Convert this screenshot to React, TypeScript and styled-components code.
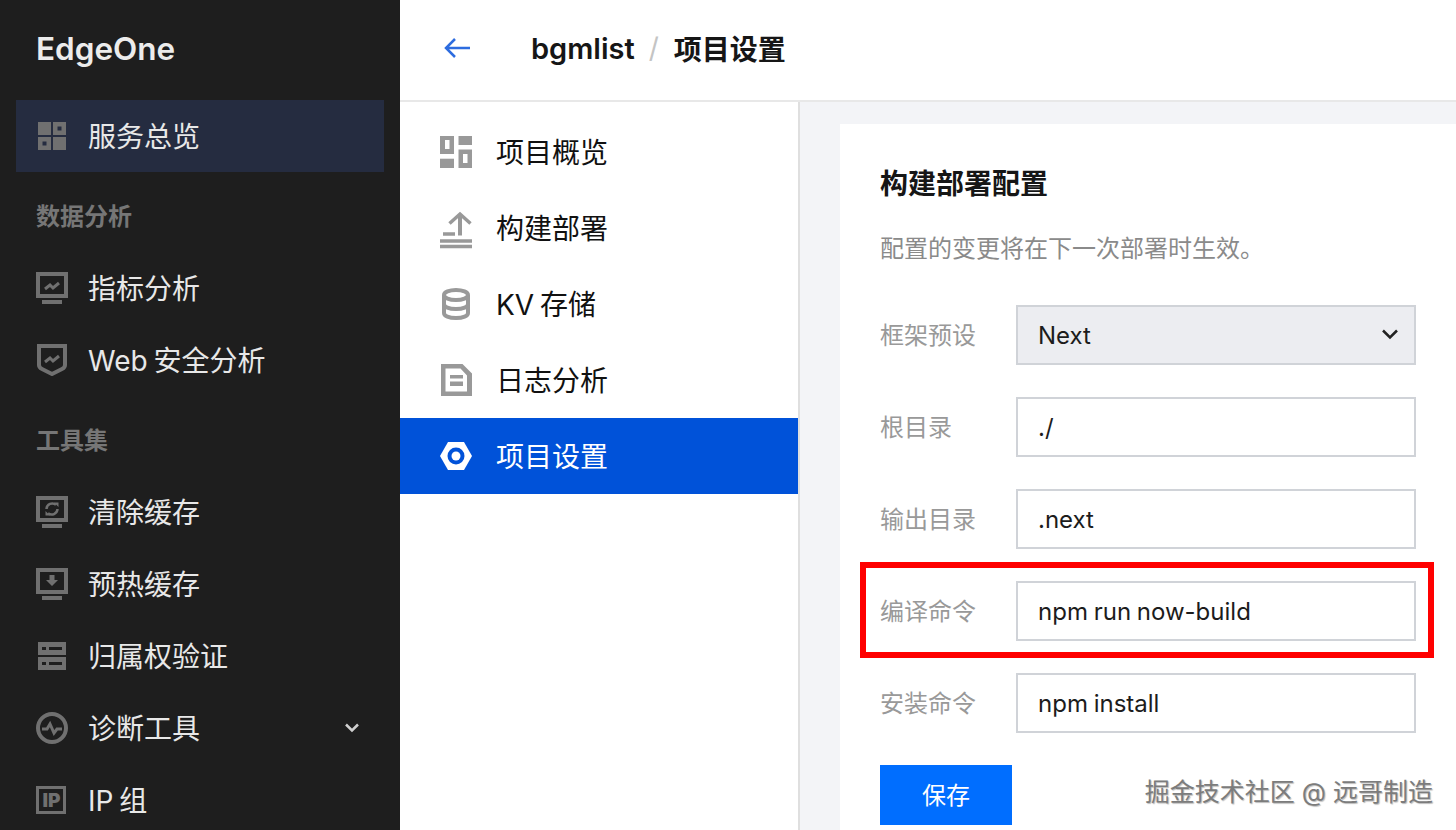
import { ReactNode } from "react";
import { createGlobalStyle, styled } from "styled-components";

const GlobalStyle = createGlobalStyle`
  html, body {
    margin: 0;
    padding: 0;
    background: #fff;
  }
  body {
    font-family: Inter, "Noto Sans CJK SC", sans-serif;
  }
`;

const Page = styled.div`
  display: flex;
  width: 1456px;
  height: 830px;
  overflow: hidden;
`;

const Sidebar = styled.aside`
  flex: 0 0 400px;
  background: #1e1e1e;
  color: #e8e8e8;
`;

const Brand = styled.div`
  height: 100px;
  line-height: 98px;
  padding-left: 36px;
  font-size: 31.5px;
  font-weight: 600;
  color: #ececec;
`;

const SideItem = styled.div<{ $active?: boolean }>`
  display: flex;
  align-items: center;
  gap: 20px;
  height: 72px;
  margin: 0 16px;
  padding: 0 24px 0 20px;
  font-size: 28px;
  word-spacing: -2px;
  background: ${props => (props.$active ? "#252c40" : "transparent")};
  svg {
    flex: none;
    width: 32px;
    height: 32px;
  }
`;

const SideLabel = styled.div`
  flex: 1;
  margin-top: -2px;
`;

const SideChevron = styled.svg`
  &&& {
    width: 16px;
    height: 16px;
  }
`;

const SideTitle = styled.div`
  height: 80px;
  box-sizing: border-box;
  padding: 29px 0 0 36px;
  line-height: 32px;
  font-size: 24px;
  font-weight: 700;
  color: #767676;
`;

const Main = styled.div`
  flex: 1;
  display: flex;
  flex-direction: column;
  min-width: 0;
`;

const Header = styled.header`
  display: flex;
  align-items: center;
  flex: 0 0 102px;
  box-sizing: border-box;
  padding: 0 0 4px 44px;
  border-bottom: 2px solid #e8e8e8;
  font-size: 28px;
  font-weight: 600;
  color: #161616;
`;

const BackArrow = styled.svg`
  width: 26px;
  height: 22px;
  margin-right: 61px;
`;

const ProjectName = styled.span`
  font-size: 29px;
`;

const Crumb = styled.span`
  color: #c4c4c4;
  font-weight: 400;
  margin: 0 15px 0 14px;
`;

const Body = styled.div`
  flex: 1;
  display: flex;
  min-height: 0;
`;

const Menu = styled.nav`
  flex: 0 0 398px;
  padding-top: 12px;
  border-right: 2px solid #dfdfdf;
`;

const MenuItem = styled.div<{ $active?: boolean }>`
  display: flex;
  align-items: center;
  gap: 24px;
  height: 76px;
  padding-left: 40px;
  font-size: 28px;
  word-spacing: -2px;
  color: ${props => (props.$active ? "#fff" : "#111")};
  background: ${props => (props.$active ? "#0052d9" : "transparent")};
  svg {
    flex: none;
    width: 32px;
    height: 32px;
    overflow: visible;
  }
`;

const MenuText = styled.span`
  margin-top: -2px;
`;

const Content = styled.main`
  position: relative;
  flex: 1;
  padding: 22px 0 0 40px;
  background: #f3f4f7;
  min-width: 0;
`;

const Card = styled.section`
  height: 100%;
  padding: 40px 40px 0 40px;
  background: #fff;
`;

const Title = styled.h2`
  margin: 0;
  line-height: 40px;
  font-size: 28px;
  font-weight: 600;
  color: #161616;
`;

const Hint = styled.p`
  margin: 29px 0 40px;
  line-height: 32px;
  font-size: 24px;
  color: #8a8a8a;
`;

const Form = styled.div`
  display: flex;
  flex-direction: column;
  gap: 32px;
`;

const Row = styled.div<{ $marked?: boolean }>`
  position: relative;
  display: flex;
  align-items: center;
  &::after {
    content: "";
    display: ${props => (props.$marked ? "block" : "none")};
    position: absolute;
    inset: -19px -18px -17px -20px;
    border: 6px solid #f00;
    pointer-events: none;
  }
`;

const Label = styled.label`
  flex: 0 0 136px;
  margin-top: -3px;
  font-size: 24px;
  color: #999;
`;

const Field = styled.div<{ $select?: boolean }>`
  flex: 1;
  display: flex;
  align-items: center;
  justify-content: space-between;
  box-sizing: border-box;
  height: 60px;
  padding: 0 16px 0 20px;
  border: 2px solid #d0d3d8;
  font-size: 24px;
  word-spacing: -1px;
  color: #1c1c1c;
  background: ${props => (props.$select ? "#ecedf1" : "#fff")};
`;

const SelectArrow = styled.svg`
  width: 16px;
  height: 16px;
`;

const SaveButton = styled.button`
  display: block;
  width: 132px;
  height: 60px;
  margin-top: 32px;
  border: 0;
  padding: 0 0 3px;
  font-family: inherit;
  font-size: 24px;
  color: #fff;
  background: #006eff;
`;

const Watermark = styled.div`
  position: absolute;
  right: 23px;
  bottom: 20px;
  font-size: 25px;
  line-height: 36px;
  color: #7c7c7c;
  white-space: nowrap;
  text-shadow: 1px 1px 1px #bbb;
`;

const sideIcon = "#707070";
const menuIcon = "#999";

const GridIcon = () => (
  <svg viewBox="0 0 32 32" fill={sideIcon} fillRule="evenodd">
    <path d="M2 2h13v13H2z" />
    <path d="M17 2h13v13H17zM21.500 6.500v4h4v-4z" />
    <path d="M2 17h13v13H2zM6.500 21.500v4h4v-4z" />
    <path d="M17 17h13v13H17z" />
  </svg>
);

const Monitor = ({ children }: { children: ReactNode }) => (
  <svg viewBox="0 0 32 32" fill="none">
    <rect x="2" y="2" width="28" height="22" stroke={sideIcon} strokeWidth="4" />
    <rect x="6" y="28" width="20" height="4" fill={sideIcon} />
    {children}
  </svg>
);

const Zigzag = () => <path d="M9 17l5-4 3 3 6-5" stroke={sideIcon} strokeWidth="3" fill="none" />;

const ShieldIcon = () => (
  <svg viewBox="0 0 32 32" fill="none">
    <path d="M3 2h26v19c0 2-1 3-3 4L16 30 6 25c-2-1-3-2-3-4z" stroke={sideIcon} strokeWidth="4" />
    <path d="M9 18l5-4 3 3 6-5" stroke={sideIcon} strokeWidth="3" />
  </svg>
);

const ServerIcon = () => (
  <svg viewBox="0 0 32 32" fill={sideIcon} fillRule="evenodd">
    <path d="M2 2h28v13H2zM6 7v3h4V7zM13 7v3h13V7z" />
    <path d="M2 17h28v13H2zM6 22v3h4v-3zM13 22v3h13v-3z" />
  </svg>
);

const PulseIcon = () => (
  <svg viewBox="0 0 32 32" fill="none">
    <circle cx="16" cy="16" r="14" stroke={sideIcon} strokeWidth="4" />
    <path d="M6 17h5l3-5 4 9 3-4h5" stroke={sideIcon} strokeWidth="3" />
  </svg>
);

const IpIcon = () => (
  <svg viewBox="0 0 32 32" fill="none">
    <rect x="1.500" y="3.500" width="27" height="25" stroke={sideIcon} strokeWidth="3" />
    <text x="15.500" y="23" textAnchor="middle" fontFamily="Inter, sans-serif" fontSize="19" fontWeight="900" fill={sideIcon}>IP</text>
  </svg>
);

const OverviewIcon = () => (
  <svg viewBox="0 0 32 32" fill={menuIcon} fillRule="evenodd">
    <path d="M0 0h14v18H0zM5 4v9h4.500V4z" />
    <path d="M18.500 0H32v9H18.500z" />
    <path d="M0 22.700h14V32H0z" />
    <path d="M18.500 13.500H32V32H18.500zM23 18v9h4.500v-9z" />
  </svg>
);

const DeployIcon = () => (
  <svg viewBox="0 0 32 32" fill="none" stroke={menuIcon}>
    <path d="M9.500 11.500L20 2l10.500 9.500" strokeWidth="3.500" />
    <path d="M20 2v21.500" strokeWidth="4" />
    <path d="M3 22h12" strokeWidth="3.500" />
    <path d="M0 29h32M0 34.500h32" strokeWidth="3.500" />
  </svg>
);

const StoreIcon = () => (
  <svg viewBox="0 0 32 32" fill="none" stroke={menuIcon} strokeWidth="4">
    <ellipse cx="16" cy="7" rx="12" ry="5" />
    <path d="M4 7v18c0 3 5 5 12 5s12-2 12-5V7" />
    <path d="M4 16c0 3 5 5 12 5s12-2 12-5" />
  </svg>
);

const LogIcon = () => (
  <svg viewBox="0 0 32 32" fill={menuIcon} fillRule="evenodd">
    <path d="M1 0h21.500L32 9.500V32H1zM5.500 4.500v23H27V11.500L20.500 4.500z" />
    <path d="M10 11h13v3.500H10zM10 17.500h13V22H10z" />
  </svg>
);

const SettingsIcon = () => (
  <svg viewBox="0 0 32 32">
    <path d="M0 16L8 2h16l8 14-8 14H8z" fill="#fff" />
    <circle cx="16" cy="16" r="8.500" fill="#0052d9" />
    <circle cx="16" cy="16" r="4.500" fill="#fff" />
  </svg>
);

const Chevron = ({ color }: { color: string }) => (
  <SideChevron viewBox="0 0 16 16" fill="none">
    <path d="M2 4.500l6 6 6-6" stroke={color} strokeWidth="2.500" />
  </SideChevron>
);

export default function App() {
  return (
    <Page>
      <GlobalStyle />
      <Sidebar>
        <Brand>EdgeOne</Brand>
        <SideItem $active><GridIcon /><SideLabel>服务总览</SideLabel></SideItem>
        <SideTitle>数据分析</SideTitle>
        <SideItem>
          <Monitor><Zigzag /></Monitor>
          <SideLabel>指标分析</SideLabel>
        </SideItem>
        <SideItem><ShieldIcon /><SideLabel>Web 安全分析</SideLabel></SideItem>
        <SideTitle>工具集</SideTitle>
        <SideItem>
          <Monitor>
            <path d="M10.500 13a5.800 5.800 0 0 1 9.500-4.200M21.500 13a5.800 5.800 0 0 1-9.500 4.200" stroke={sideIcon} strokeWidth="2.500" fill="none" />
            <path d="M18 6.500h4.500V11zM14 19.500H9.500V15z" fill={sideIcon} />
          </Monitor>
          <SideLabel>清除缓存</SideLabel>
        </SideItem>
        <SideItem>
          <Monitor>
            <path d="M13.500 7h5v5h3.500L16 18l-6-6h3.500z" fill={sideIcon} />
          </Monitor>
          <SideLabel>预热缓存</SideLabel>
        </SideItem>
        <SideItem><ServerIcon /><SideLabel>归属权验证</SideLabel></SideItem>
        <SideItem>
          <PulseIcon />
          <SideLabel>诊断工具</SideLabel>
          <Chevron color="#d0d0d0" />
        </SideItem>
        <SideItem><IpIcon /><SideLabel>IP 组</SideLabel></SideItem>
      </Sidebar>
      <Main>
        <Header>
          <BackArrow viewBox="0 0 26 22" fill="none">
            <path d="M11 2L2 11l9 9M2 11h24" stroke="#2d6cdf" strokeWidth="2.500" />
          </BackArrow>
          <ProjectName>bgmlist</ProjectName><Crumb>/</Crumb>项目设置
        </Header>
        <Body>
          <Menu>
            <MenuItem><OverviewIcon /><MenuText>项目概览</MenuText></MenuItem>
            <MenuItem><DeployIcon /><MenuText>构建部署</MenuText></MenuItem>
            <MenuItem><StoreIcon /><MenuText>KV 存储</MenuText></MenuItem>
            <MenuItem><LogIcon /><MenuText>日志分析</MenuText></MenuItem>
            <MenuItem $active><SettingsIcon /><MenuText>项目设置</MenuText></MenuItem>
          </Menu>
          <Content>
            <Card>
              <Title>构建部署配置</Title>
              <Hint>配置的变更将在下一次部署时生效。</Hint>
              <Form>
                <Row>
                  <Label>框架预设</Label>
                  <Field $select>
                    Next
                    <SelectArrow viewBox="0 0 16 16" fill="none">
                      <path d="M1 3.500l7 7 7-7" stroke="#222" strokeWidth="2.500" />
                    </SelectArrow>
                  </Field>
                </Row>
                <Row>
                  <Label>根目录</Label>
                  <Field>./</Field>
                </Row>
                <Row>
                  <Label>输出目录</Label>
                  <Field>.next</Field>
                </Row>
                <Row $marked>
                  <Label>编译命令</Label>
                  <Field>npm run now-build</Field>
                </Row>
                <Row>
                  <Label>安装命令</Label>
                  <Field>npm install</Field>
                </Row>
              </Form>
              <SaveButton>保存</SaveButton>
            </Card>
            <Watermark>掘金技术社区 @ 远哥制造</Watermark>
          </Content>
        </Body>
      </Main>
    </Page>
  );
}
